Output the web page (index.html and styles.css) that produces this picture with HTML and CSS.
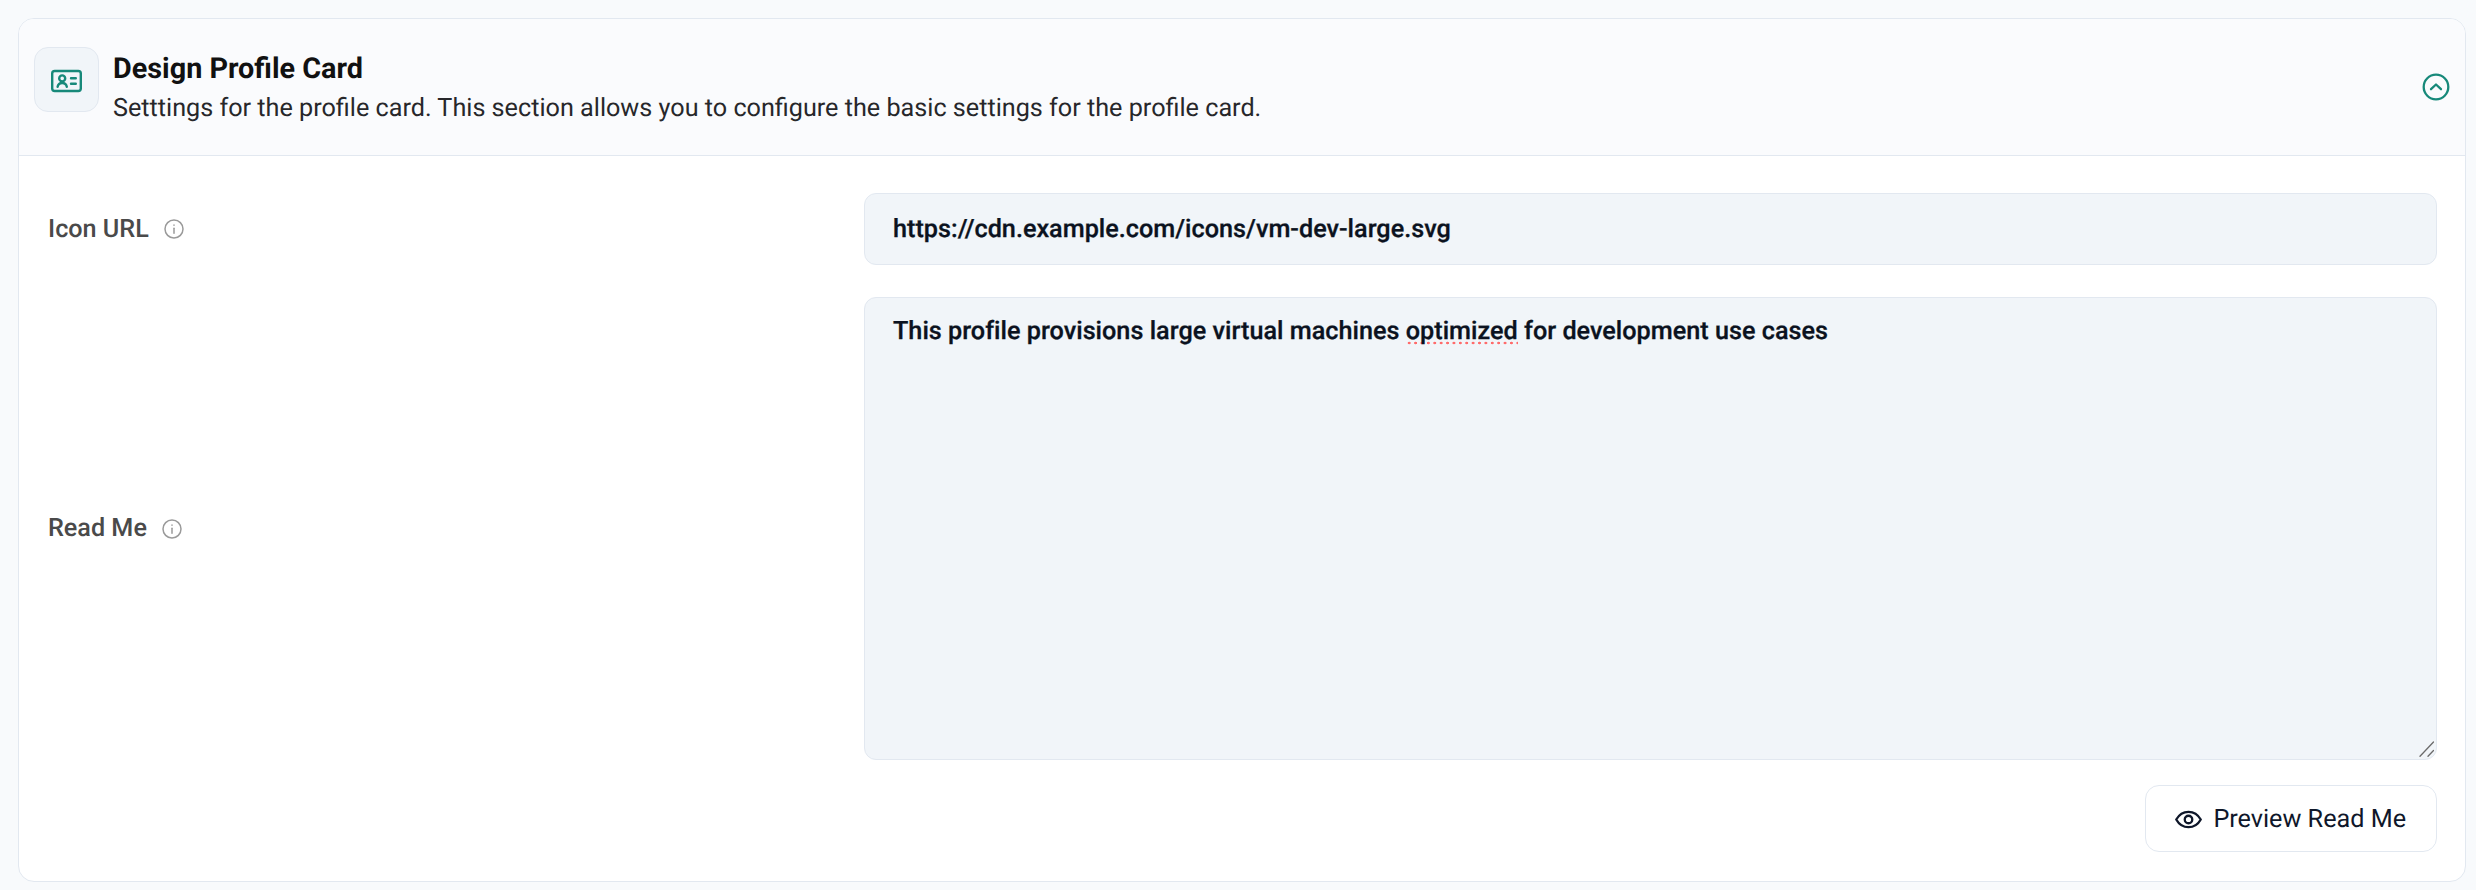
FILE: index.html
```html
<!DOCTYPE html>
<html lang="en">
<head>
<meta charset="utf-8">
<title>Design Profile Card</title>
<link rel="stylesheet" href="styles.css">
</head>
<body>
<section class="card">
  <header class="card-head">
    <div class="icon-box">
      <svg width="32" height="32" viewBox="0 0 32 32" fill="none" stroke="#17897a" stroke-width="2.4" stroke-linecap="round" stroke-linejoin="round">
        <rect x="1.2" y="7" width="28.6" height="20" rx="2.5"/>
        <circle cx="11.200" cy="14.400" r="3"/>
        <path d="M6.600 22.800c.5-2.700 2.300-3.800 4.600-3.800s4.100 1.100 4.600 3.800"/>
        <path d="M20 14.200h4.800M20 19.800h4.800"/>
      </svg>
    </div>
    <div class="head-text">
      <h2 class="title">Design Profile Card</h2>
      <p class="subtitle">Setttings for the profile card. This section allows you to configure the basic settings for the profile card.</p>
    </div>
    <svg class="toggle" width="28" height="28" viewBox="0 0 28 28" fill="none" stroke="#17897a" stroke-width="2.300" stroke-linecap="round" stroke-linejoin="round">
      <circle cx="14" cy="14" r="12.300"/>
      <path d="M9 16.200l5-4.700 5 4.700"/>
    </svg>
  </header>
  <div class="card-body">
    <div class="row row-input">
      <div class="label-cell">
        <span class="label">Icon URL</span>
        <svg class="info" width="20" height="20" viewBox="0 0 20 20" fill="none" stroke="#9a9a9a" stroke-width="1.500" stroke-linecap="round">
          <circle cx="10" cy="10" r="9"/>
          <path d="M10 9.200v5"/>
          <path d="M10 6.100v.1"/>
        </svg>
      </div>
      <div class="field field-input">https://cdn.example.com/icons/vm-dev-large.svg</div>
    </div>
    <div class="row row-area">
      <div class="label-cell">
        <span class="label">Read Me</span>
        <svg class="info" width="20" height="20" viewBox="0 0 20 20" fill="none" stroke="#9a9a9a" stroke-width="1.500" stroke-linecap="round">
          <circle cx="10" cy="10" r="9"/>
          <path d="M10 9.200v5"/>
          <path d="M10 6.100v.1"/>
        </svg>
      </div>
      <div class="field field-area">This profile provisions large virtual machines <span class="misspelled">optimized</span> for development use cases
        <svg class="grip" width="15" height="16" viewBox="0 0 15 16" fill="none" stroke="#6b6b6b" stroke-width="1.300" stroke-linecap="round">
          <path d="M1 15.300L14.500 1"/>
          <path d="M9 15.300l5.500-5.800"/>
        </svg>
      </div>
    </div>
    <div class="actions">
      <button class="btn" type="button">
        <svg width="27" height="27" viewBox="0 0 28 28" fill="none" stroke="#0f172a" stroke-width="2.400" stroke-linecap="round" stroke-linejoin="round">
          <path d="M1.300 14c3-5.400 7.200-8 12.700-8s9.700 2.600 12.700 8c-3 5.400-7.200 8-12.700 8s-9.700-2.600-12.700-8z"/>
          <circle cx="14" cy="14" r="3.900"/>
        </svg>
        <span>Preview Read Me</span>
      </button>
    </div>
  </div>
</section>
</body>
</html>
```
FILE: styles.css
```css
* { box-sizing: border-box; }
html, body { height: 100%; }
body {
  margin: 0;
  padding: 18px 10px 8px 18px;
  background: #f8fafc;
  font-family: Roboto, "Liberation Sans", sans-serif;
  color: #0f172a;
  text-rendering: geometricPrecision;
}
.card {
  width: 2448px;
  height: 864px;
  border: 1px solid #e2e8f0;
  border-radius: 16px;
  background: #fff;
  overflow: hidden;
}
.card-head {
  display: flex;
  align-items: center;
  height: 137px;
  padding: 0 15px 0 15px;
  background: #fafbfd;
  border-bottom: 1px solid #e2e8f0;
}
.icon-box {
  width: 65px;
  height: 65px;
  flex: none;
  align-self: flex-start;
  margin-top: 28px;
  display: flex;
  align-items: center;
  justify-content: center;
  background: #f1f5f9;
  border: 1px solid #e2e8f0;
  border-radius: 14px;
}
.head-text { flex: 1; margin-left: 14px; padding-top: 2px; }
.title {
  margin: 0;
  font-size: 28.8px;
  line-height: 38px;
  font-weight: 700;
  color: #111;
}
.subtitle {
  margin: 3px 0 0;
  font-size: 25.2px;
  line-height: 36px;
  color: #27272a;
}
.toggle { flex: none; }
.card-body { padding: 37px 28px 0 29px; }
.row { display: flex; align-items: center; }
.row-area { margin-top: 32px; }
.label-cell {
  width: 816px;
  flex: none;
  display: flex;
  align-items: center;
  gap: 15px;
}
.label {
  font-size: 25.2px;
  font-weight: 500;
  color: #4a4a4a;
}
.field {
  flex: 1;
  background: #f1f5f9;
  border: 1px solid #e2e8f0;
  border-radius: 12px;
  padding: 0 28px;
  font-size: 25.2px;
  font-weight: 500;
  letter-spacing: 0.02px;
  -webkit-text-stroke: 0.3px #0b1220;
  color: #0b1220;
}
.field-input {
  height: 72px;
  display: flex;
  align-items: center;
  padding-top: 1px;
}
.field-area {
  position: relative;
  height: 463px;
  padding-top: 17px;
  line-height: 34px;
}
.grip {
  position: absolute;
  right: 2px;
  bottom: 2px;
}
.misspelled {
  background: radial-gradient(circle, #ff6b6b 1.2px, transparent 1.6px) 0 calc(100% - 1px) / 6.4px 4px repeat-x;
}
.actions {
  display: flex;
  justify-content: flex-end;
  margin-top: 25px;
}
.btn {
  display: flex;
  align-items: center;
  gap: 11px;
  height: 67px;
  padding: 1px 30px 0 29px;
  background: #fff;
  border: 1px solid #e2e8f0;
  border-radius: 14px;
  font: 400 25.2px Roboto, "Liberation Sans", sans-serif;
  color: #0f172a;
  text-rendering: geometricPrecision;
}
```
